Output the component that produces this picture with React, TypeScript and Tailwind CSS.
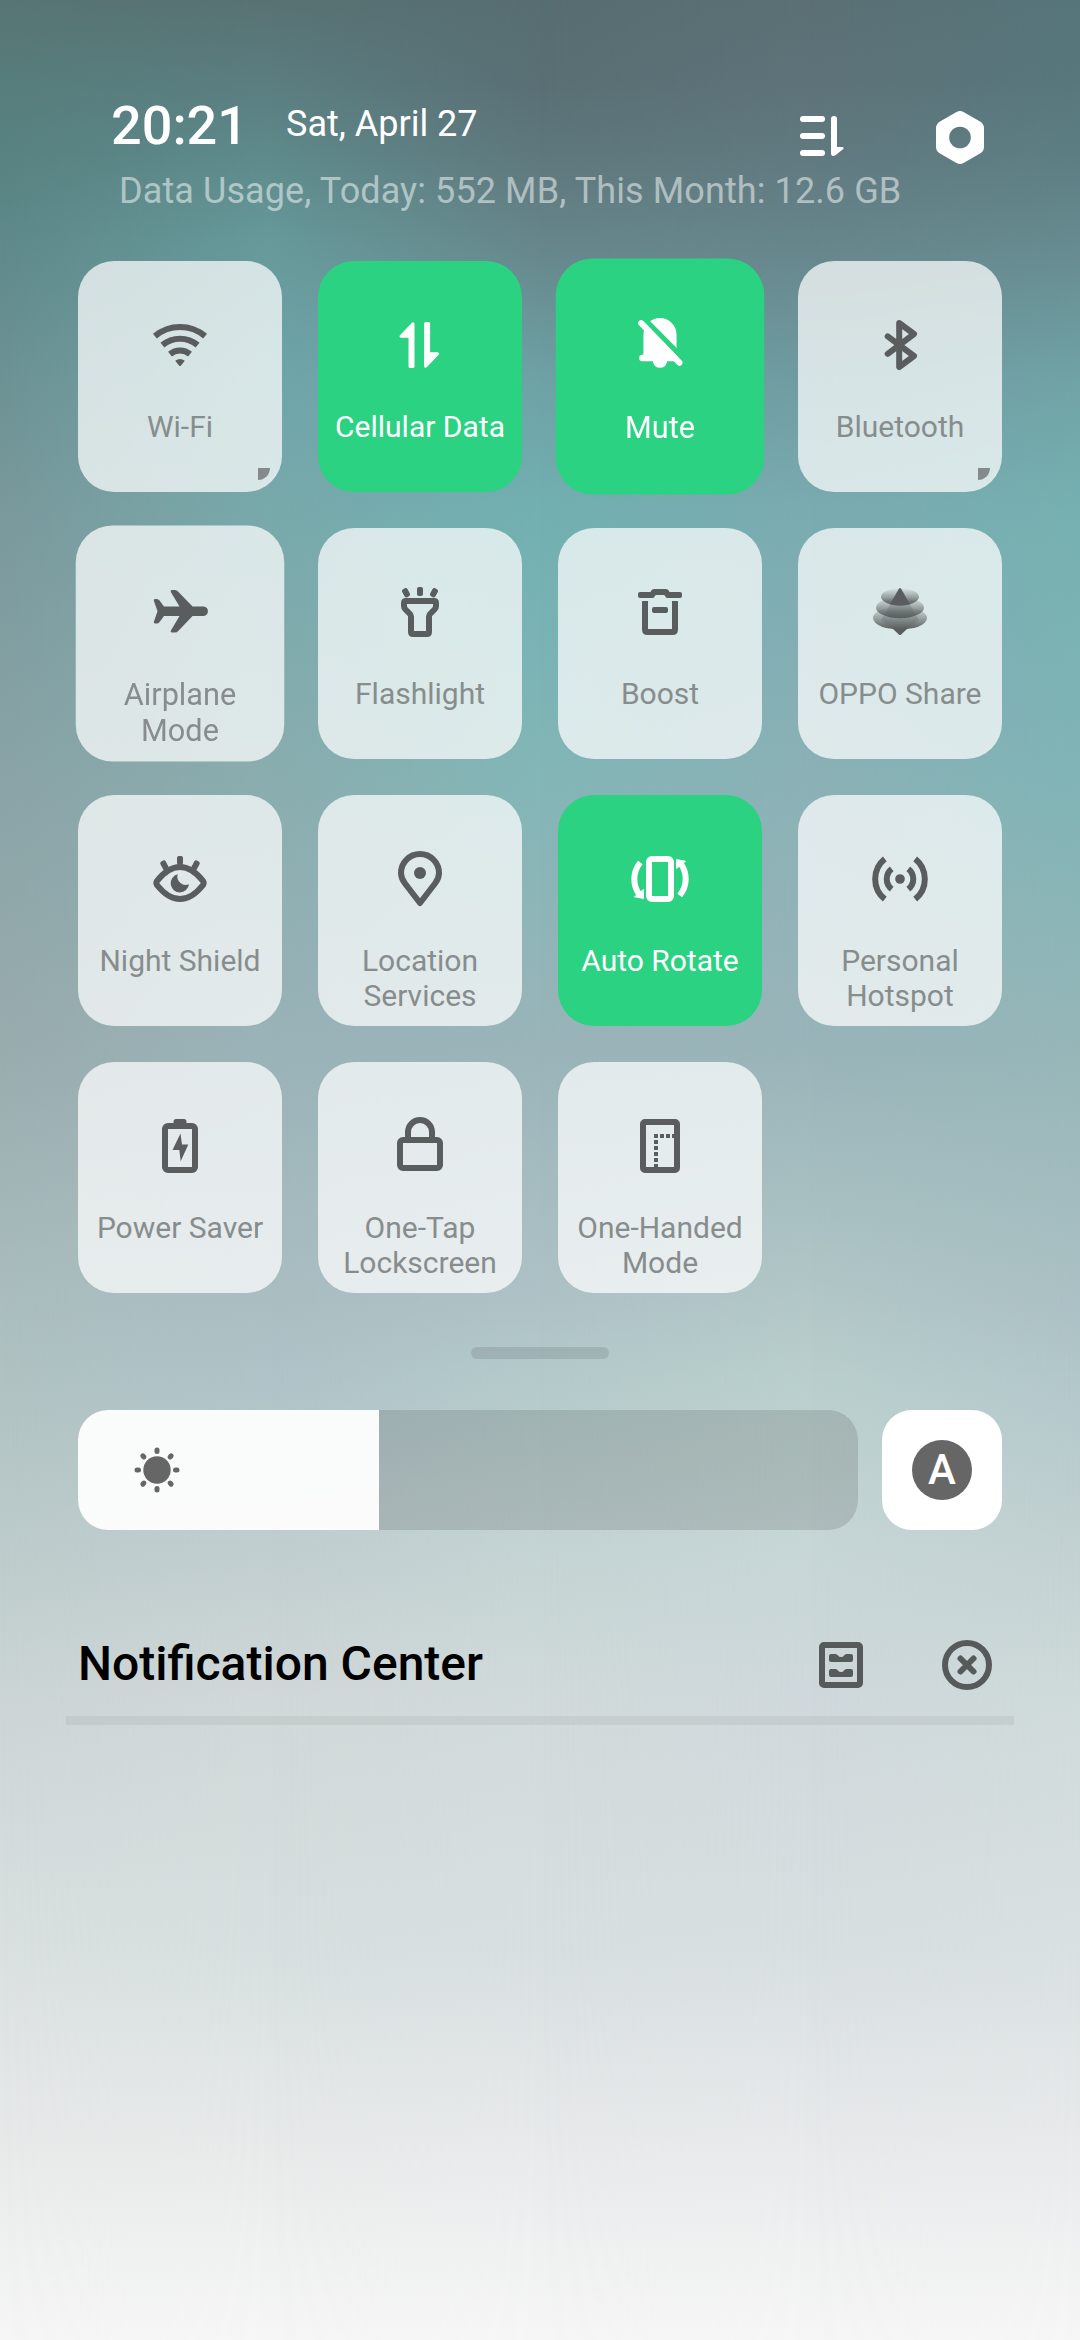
import { ReactNode } from 'react'
import { clsx } from 'clsx'

interface Tile {
  label: string
  icon: ReactNode
  active?: boolean
  enlarged?: boolean
  expandable?: boolean
}

// Vertical colour ramps of the wallpaper, one for each quarter of the width
const rampStops = [0, 80, 150, 240, 380, 510, 780, 1050, 1300, 1380, 1540, 1700, 1950, 2150, 2340]
const ramps = [
  ['#577573', '#577d7c', '#588281', '#5f898a', '#6d9294', '#7a999c', '#8aa4a7', '#99acae', '#abbdbe', '#b0c2c2', '#bccbcb', '#ccd5d6', '#dae0e0', '#e8eaea', '#f6f6f6'],
  ['#587273', '#5b7d80', '#5e898a', '#66999a', '#70a6a9', '#78a9ab', '#8aadaf', '#9ab3b8', '#aabec2', '#afc3c8', '#c0cdcf', '#d0d8d8', '#d7dfdf', '#e8eaea', '#f6f6f6'],
  ['#576d72', '#596f74', '#5e777c', '#66858a', '#6ea2a5', '#72b0b1', '#83b6b7', '#9ab4b9', '#aec2c6', '#b4caca', '#c3d3d3', '#d1dada', '#d8dfe0', '#e8eaeb', '#f6f6f6'],
  ['#5b7075', '#5e7379', '#60797f', '#66858b', '#6f9ca1', '#7aabb0', '#8bb1b6', '#99b4b9', '#b2c7c7', '#b9cfcd', '#c6d6d6', '#cfd8dc', '#d8dfe1', '#e8eaeb', '#f6f6f6'],
  ['#56757a', '#57777c', '#5c7e83', '#668a8f', '#70a3a6', '#76b0b1', '#80b4b6', '#96b6b8', '#abc0c4', '#b2c7ca', '#c1d0d1', '#cfdada', '#d9e0e1', '#e8eaeb', '#f6f6f6'],
]

const Wallpaper = () => (
  <div className="absolute inset-0">
    {ramps.map((colors, i) => {
      const mask =
        i === 0
          ? undefined
          : `linear-gradient(to right, transparent ${(i - 1) * 25}%, black ${i * 25}%)`
      return (
        <div
          key={i}
          className="absolute inset-0"
          style={{
            backgroundImage: `linear-gradient(to bottom, ${colors
              .map((color, j) => `${color} ${rampStops[j]}px`)
              .join(', ')})`,
            maskImage: mask,
          }}
        />
      )
    })}
  </div>
)

const Icon = ({ children }: { children: ReactNode }) => (
  <svg
    viewBox="0 0 72 72"
    className="size-[72px]"
    fill="none"
    stroke="currentColor"
    strokeWidth="6"
  >
    {children}
  </svg>
)

const solid = { fill: 'currentColor', stroke: 'none' }

const WifiIcon = () => (
  <Icon>
    <path d="M10.9 27.1A39 39 0 0 1 61.1 27.1" />
    <path d="M18.4 36.1A27.3 27.3 0 0 1 53.6 36.1" />
    <path d="M26 45.1A15.5 15.5 0 0 1 46 45.1" />
    <path {...solid} d="M31.2 51.8Q36 48.4 40.8 51.8L36.8 56.7Q36 57.5 35.2 56.7Z" />
  </Icon>
)

const CellularIcon = () => (
  <Icon>
    <g fill="currentColor" strokeWidth="3" strokeLinejoin="round">
      <path d="M29 14.8L17 27.2H26V57.5H29Z" />
      <path d="M41.6 57.2L53.6 44.8H44.6V14.5H41.6Z" />
    </g>
  </Icon>
)

const MuteIcon = () => (
  <Icon>
    <path
      {...solid}
      d="M19.8 26.5A16.2 16.2 0 0 1 52.2 26.5V51L50 52.5H43Q42 59 36 59Q30 59 29 52.5H18.7A3.1 3.1 0 0 1 18.7 46.3Q19.8 46 19.8 45Z"
    />
    <path className="stroke-[#2bd281]" strokeWidth="5" d="M14 4.5L61 52" />
    <path strokeLinecap="round" d="M17.6 15.3L55 54" />
  </Icon>
)

const BluetoothIcon = () => (
  <Icon>
    <path
      strokeLinecap="round"
      strokeLinejoin="round"
      d="M23.7 27.3L50 47L35.2 58V14L50 25L23.7 44.8"
    />
  </Icon>
)

const AirplaneIcon = () => (
  <Icon>
    <path
      {...solid}
      d="M59 31.4H48.3L34.5 17Q33 15.2 31 15.2H28Q26.3 15.3 27 17L35.5 31.4H20.3L16 25.5Q14.8 24 13.3 24H11.5Q10 24.2 10.5 26L14 36L10.5 46Q10 47.8 11.5 48H13.3Q14.8 48 16 46.5L20.3 40.6H35.5L27 55Q26.3 56.7 28 56.8H31Q33 56.8 34.5 55L48.3 40.6H59Q63.3 40 63.3 36Q63.3 32 59 31.4Z"
    />
  </Icon>
)

const FlashlightIcon = () => (
  <Icon>
    <path d="M22 25H50Q52 25 52 27V30Q52 32 50.5 33.5L46 38Q45 39 45 41V56Q45 58 43 58H29Q27 58 27 56V41Q27 39 26 38L21.5 33.5Q20 32 20 30V27Q20 25 22 25Z" />
    <g {...solid}>
      <rect x="33" y="11" width="6" height="9" rx="2" />
      <rect x="19" y="12.2" width="6" height="9" rx="2" transform="rotate(-28 22 16.7)" />
      <rect x="47" y="12.2" width="6" height="9" rx="2" transform="rotate(28 50 16.7)" />
    </g>
  </Icon>
)

const BoostIcon = () => (
  <Icon>
    <path
      {...solid}
      d="M16 16H26.5L27.3 14.6Q28.2 13 30 13H42Q43.8 13 44.7 14.6L45.5 16H56Q58 16 58 18V20Q58 22 56 22H43.5Q42.3 22 41.7 21L41.2 20Q40.7 19 39.5 19H32.5Q31.3 19 30.8 20L30.3 21Q29.7 22 28.5 22H16Q14 22 14 20V18Q14 16 16 16Z"
    />
    <path d="M21 25V53.5Q21 56 23.5 56H48.5Q51 56 51 53.5V25" />
    <rect {...solid} x="28" y="31" width="16" height="6" rx="2" />
  </Icon>
)

const ShareIcon = () => (
  <Icon>
    <defs>
      <linearGradient id="disc" x1="0" y1="0" x2="0" y2="1">
        <stop offset="0" stopColor="currentColor" stopOpacity="0" />
        <stop offset="1" stopColor="currentColor" />
      </linearGradient>
    </defs>
    <g stroke="none">
      <path fill="currentColor" d="M28.5 52.5H43.5L37.2 58.4Q36 59.4 34.8 58.4Z" />
      <ellipse fill="url(#disc)" cx="36" cy="42" rx="27" ry="11.5" />
      <ellipse fill="url(#disc)" cx="36" cy="31.7" rx="24" ry="10.5" />
      <ellipse fill="url(#disc)" cx="36" cy="20.8" rx="19" ry="8.7" />
      <path fill="currentColor" fillOpacity="0.25" d="M46 28.5L55 44L45 52H27L17 44L26 28.5Z" />
      <path
        fill="currentColor"
        d="M34.9 12.7Q36 11.4 37.1 12.7L46 28.3Q41 29.5 36 29.5Q31 29.5 26 28.3Z"
      />
    </g>
  </Icon>
)

const NightIcon = () => (
  <Icon>
    <path d="M13 38C20 29 27 24 36 24S52 29 59 38Q60.3 40 59 42C52 51 45 56 36 56S20 51 13 42Q11.7 40 13 38Z" />
    <g {...solid}>
      <rect x="33" y="13" width="6" height="9" rx="2" />
      <rect x="17.5" y="17.5" width="6" height="10" rx="2" transform="rotate(-28 20.5 22.5)" />
      <rect x="48.5" y="17.5" width="6" height="10" rx="2" transform="rotate(28 51.5 22.5)" />
      <path d="M33.7 31.3A9.2 9.2 0 1 0 45 41.3A8.4 8.4 0 0 1 33.7 31.3Z" />
    </g>
  </Icon>
)

const LocationIcon = () => (
  <Icon>
    <path
      strokeLinejoin="round"
      d="M36 60L21 40.5Q17 35.5 17 30A19 19 0 0 1 55 30Q55 35.5 51 40.5Z"
    />
    <circle {...solid} cx="36" cy="30" r="6" />
  </Icon>
)

const RotateArrow = () => (
  <>
    <path d="M16.3 19.5Q10.3 27 10.3 36Q10.3 45 15.5 51.5" />
    <path fill="currentColor" strokeWidth="1" strokeLinejoin="round" d="M19.5 46.5V55.5L10.5 53.7Z" />
  </>
)

const RotateIcon = () => (
  <Icon>
    <rect x="25" y="16" width="22" height="40" rx="3" />
    <RotateArrow />
    <g transform="rotate(180 36 36)">
      <RotateArrow />
    </g>
  </Icon>
)

const HotspotIcon = () => (
  <Icon>
    <circle {...solid} cx="36" cy="36" r="4.8" />
    <path d="M27.7 25.8A13 13 0 0 0 27.7 46.2M44.3 25.8A13 13 0 0 1 44.3 46.2" />
    <path d="M20.8 15.8A26 26 0 0 0 20.8 56.2M51.2 15.8A26 26 0 0 1 51.2 56.2" />
  </Icon>
)

const BatteryIcon = () => (
  <Icon>
    <rect x="21" y="16" width="30" height="44" rx="3" />
    <rect {...solid} x="29.5" y="9" width="13" height="7" rx="2.5" />
    <path {...solid} d="M36.5 23.5L28.5 40H35.3L36.7 51.3L44.3 34.5H38Z" />
  </Icon>
)

const LockIcon = () => (
  <Icon>
    <rect x="16" y="30" width="40" height="28" rx="3" />
    <path d="M24 28V22A12 12 0 0 1 48 22V28" />
  </Icon>
)

const OneHandedIcon = () => (
  <Icon>
    <rect x="19" y="12" width="34" height="48" rx="2" />
    <path strokeWidth="4" strokeDasharray="4 2" d="M30 26H51" />
    <path strokeWidth="4" strokeDasharray="4 2" d="M32 24V58" />
  </Icon>
)

const tiles: Tile[] = [
  { label: 'Wi-Fi', icon: <WifiIcon />, expandable: true },
  { label: 'Cellular Data', icon: <CellularIcon />, active: true },
  { label: 'Mute', icon: <MuteIcon />, active: true, enlarged: true },
  { label: 'Bluetooth', icon: <BluetoothIcon />, expandable: true },
  { label: 'Airplane Mode', icon: <AirplaneIcon />, enlarged: true },
  { label: 'Flashlight', icon: <FlashlightIcon /> },
  { label: 'Boost', icon: <BoostIcon /> },
  { label: 'OPPO Share', icon: <ShareIcon /> },
  { label: 'Night Shield', icon: <NightIcon /> },
  { label: 'Location Services', icon: <LocationIcon /> },
  { label: 'Auto Rotate', icon: <RotateIcon />, active: true },
  { label: 'Personal Hotspot', icon: <HotspotIcon /> },
  { label: 'Power Saver', icon: <BatteryIcon /> },
  { label: 'One-Tap Lockscreen', icon: <LockIcon /> },
  { label: 'One-Handed Mode', icon: <OneHandedIcon /> },
]

const QuickTile = ({ label, icon, active, enlarged, expandable }: Tile) => (
  <button
    className={clsx(
      'relative flex h-[231px] flex-col items-center rounded-[36px] pt-12',
      active ? 'bg-[#2bd281] text-white' : 'bg-white/72 text-[#595d5d]',
      enlarged && 'scale-[1.022]'
    )}
  >
    {icon}
    <span
      className={clsx(
        'mt-7 px-3 text-center text-[30px] leading-[35px]',
        !active && 'text-[#878d8d]'
      )}
    >
      {label}
    </span>
    {expandable && (
      <span className="absolute right-3 bottom-3 size-3 rounded-br-full bg-[#858a8b]" />
    )}
  </button>
)

const Header = () => (
  <header className="flex h-[261px] justify-between pt-[93px] pr-[96px] pl-[111px] text-white">
    <div className="pt-px">
      <div className="flex h-[64px]">
        <span className="text-[54px] leading-[64px] font-medium">20:21</span>
        <span className="ml-[38px] pt-[9px] text-[36px] leading-[43px]">Sat, April 27</span>
      </div>
      <div className="mt-[12px] ml-[8px] text-[36px] leading-[43px] tracking-[0.1px] whitespace-nowrap text-white/50">
        Data Usage, Today: 552 MB, This Month: 12.6 GB
      </div>
    </div>
    <div className="-ml-[120px] flex gap-[91px] pt-[18px]">
      <svg viewBox="0 0 46 54" className="h-[54px] w-[46px] fill-white">
        <rect x="1" y="5" width="25" height="6" rx="3" />
        <rect x="1" y="22" width="25" height="6" rx="3" />
        <rect x="1" y="39" width="25" height="6" rx="3" />
        <path d="M32 8A3 3 0 0 1 38 8V36H43.5Q45.5 36.5 44.3 38L36.5 44.3Q32 46.5 32 42Z" />
      </svg>
      <svg viewBox="0 0 48 54" className="h-[54px] w-[48px]">
        <path
          fillRule="evenodd"
          className="fill-white"
          d="M20.5 1Q24 -1 27.5 1L44 10.5Q48 13 48 17V36Q48 40 44 42.5L27.5 52Q24 54 20.5 52L4 42.5Q0 40 0 36V17Q0 13 4 10.5ZM24 15.7A10.8 10.8 0 1 0 24 37.3A10.8 10.8 0 1 0 24 15.7Z"
        />
      </svg>
    </div>
  </header>
)

const rayAngles = [0, 45, 90, 135, 180, 225, 270, 315]

const BrightnessRow = () => (
  <div className="flex gap-6">
    <div className="flex h-[120px] flex-1 overflow-hidden rounded-[30px] bg-black/12">
      <div className="flex w-[301px] items-center bg-white/95 pl-[55px]">
        <svg viewBox="-24 -24 48 48" className="size-12 fill-[#666]">
          <circle r="13.7" />
          {rayAngles.map(angle => (
            <rect
              key={angle}
              x="-2.5"
              y="-22.5"
              width="5"
              height="6.5"
              rx="2.5"
              transform={`rotate(${angle})`}
            />
          ))}
        </svg>
      </div>
    </div>
    <button className="flex size-[120px] items-center justify-center rounded-[30px] bg-white">
      <span className="flex size-[60px] items-center justify-center rounded-full bg-[#666] text-[42px] leading-none font-medium text-white">
        A
      </span>
    </button>
  </div>
)

const NotificationHeader = () => (
  <div className="mt-[102px] flex h-[66px] items-center justify-between">
    <h1 className="pb-[2px] text-[48px] leading-none font-medium text-black">
      Notification Center
    </h1>
    <div className="flex items-center gap-[77px] pr-[9px] text-[#565a5b]">
      <svg viewBox="0 0 46 50" className="h-[50px] w-[46px]">
        <rect x="4" y="5" width="38" height="40" rx="2" fill="none" stroke="currentColor" strokeWidth="6" />
        <g fill="currentColor">
          <path d="M13 14H17.5Q19 14 20 15.5Q21 17 23 17T26 15.5Q27 14 28.5 14H33Q35 14 35 16V20Q35 22 33 22H13Q11 22 11 20V16Q11 14 13 14Z" />
          <path d="M13 29H17.5Q19 29 20 30.5Q21 32 23 32T26 30.5Q27 29 28.5 29H33Q35 29 35 31V35Q35 37 33 37H13Q11 37 11 35V31Q11 29 13 29Z" />
        </g>
      </svg>
      <svg
        viewBox="0 0 52 52"
        className="size-[52px]"
        fill="none"
        stroke="currentColor"
        strokeWidth="6"
        strokeLinecap="round"
      >
        <circle cx="26" cy="26" r="22" />
        <path d="M19.5 19.5L32.5 32.5M32.5 19.5L19.5 32.5" />
      </svg>
    </div>
  </div>
)

export default function App() {
  return (
    <main className="relative h-[2340px] w-[1080px] overflow-hidden font-[Roboto,sans-serif]">
      <Wallpaper />
      <div className="relative">
        <Header />
        <div className="grid grid-cols-4 gap-9 px-[78px]">
          {tiles.map(tile => (
            <QuickTile key={tile.label} {...tile} />
          ))}
        </div>
        <div className="mx-auto mt-[54px] mb-[51px] h-3 w-[138px] rounded-full bg-black/10" />
        <div className="px-[78px]">
          <BrightnessRow />
          <NotificationHeader />
        </div>
        <div className="mx-[66px] mt-[18px] h-[9px] bg-black/5" />
      </div>
    </main>
  )
}
